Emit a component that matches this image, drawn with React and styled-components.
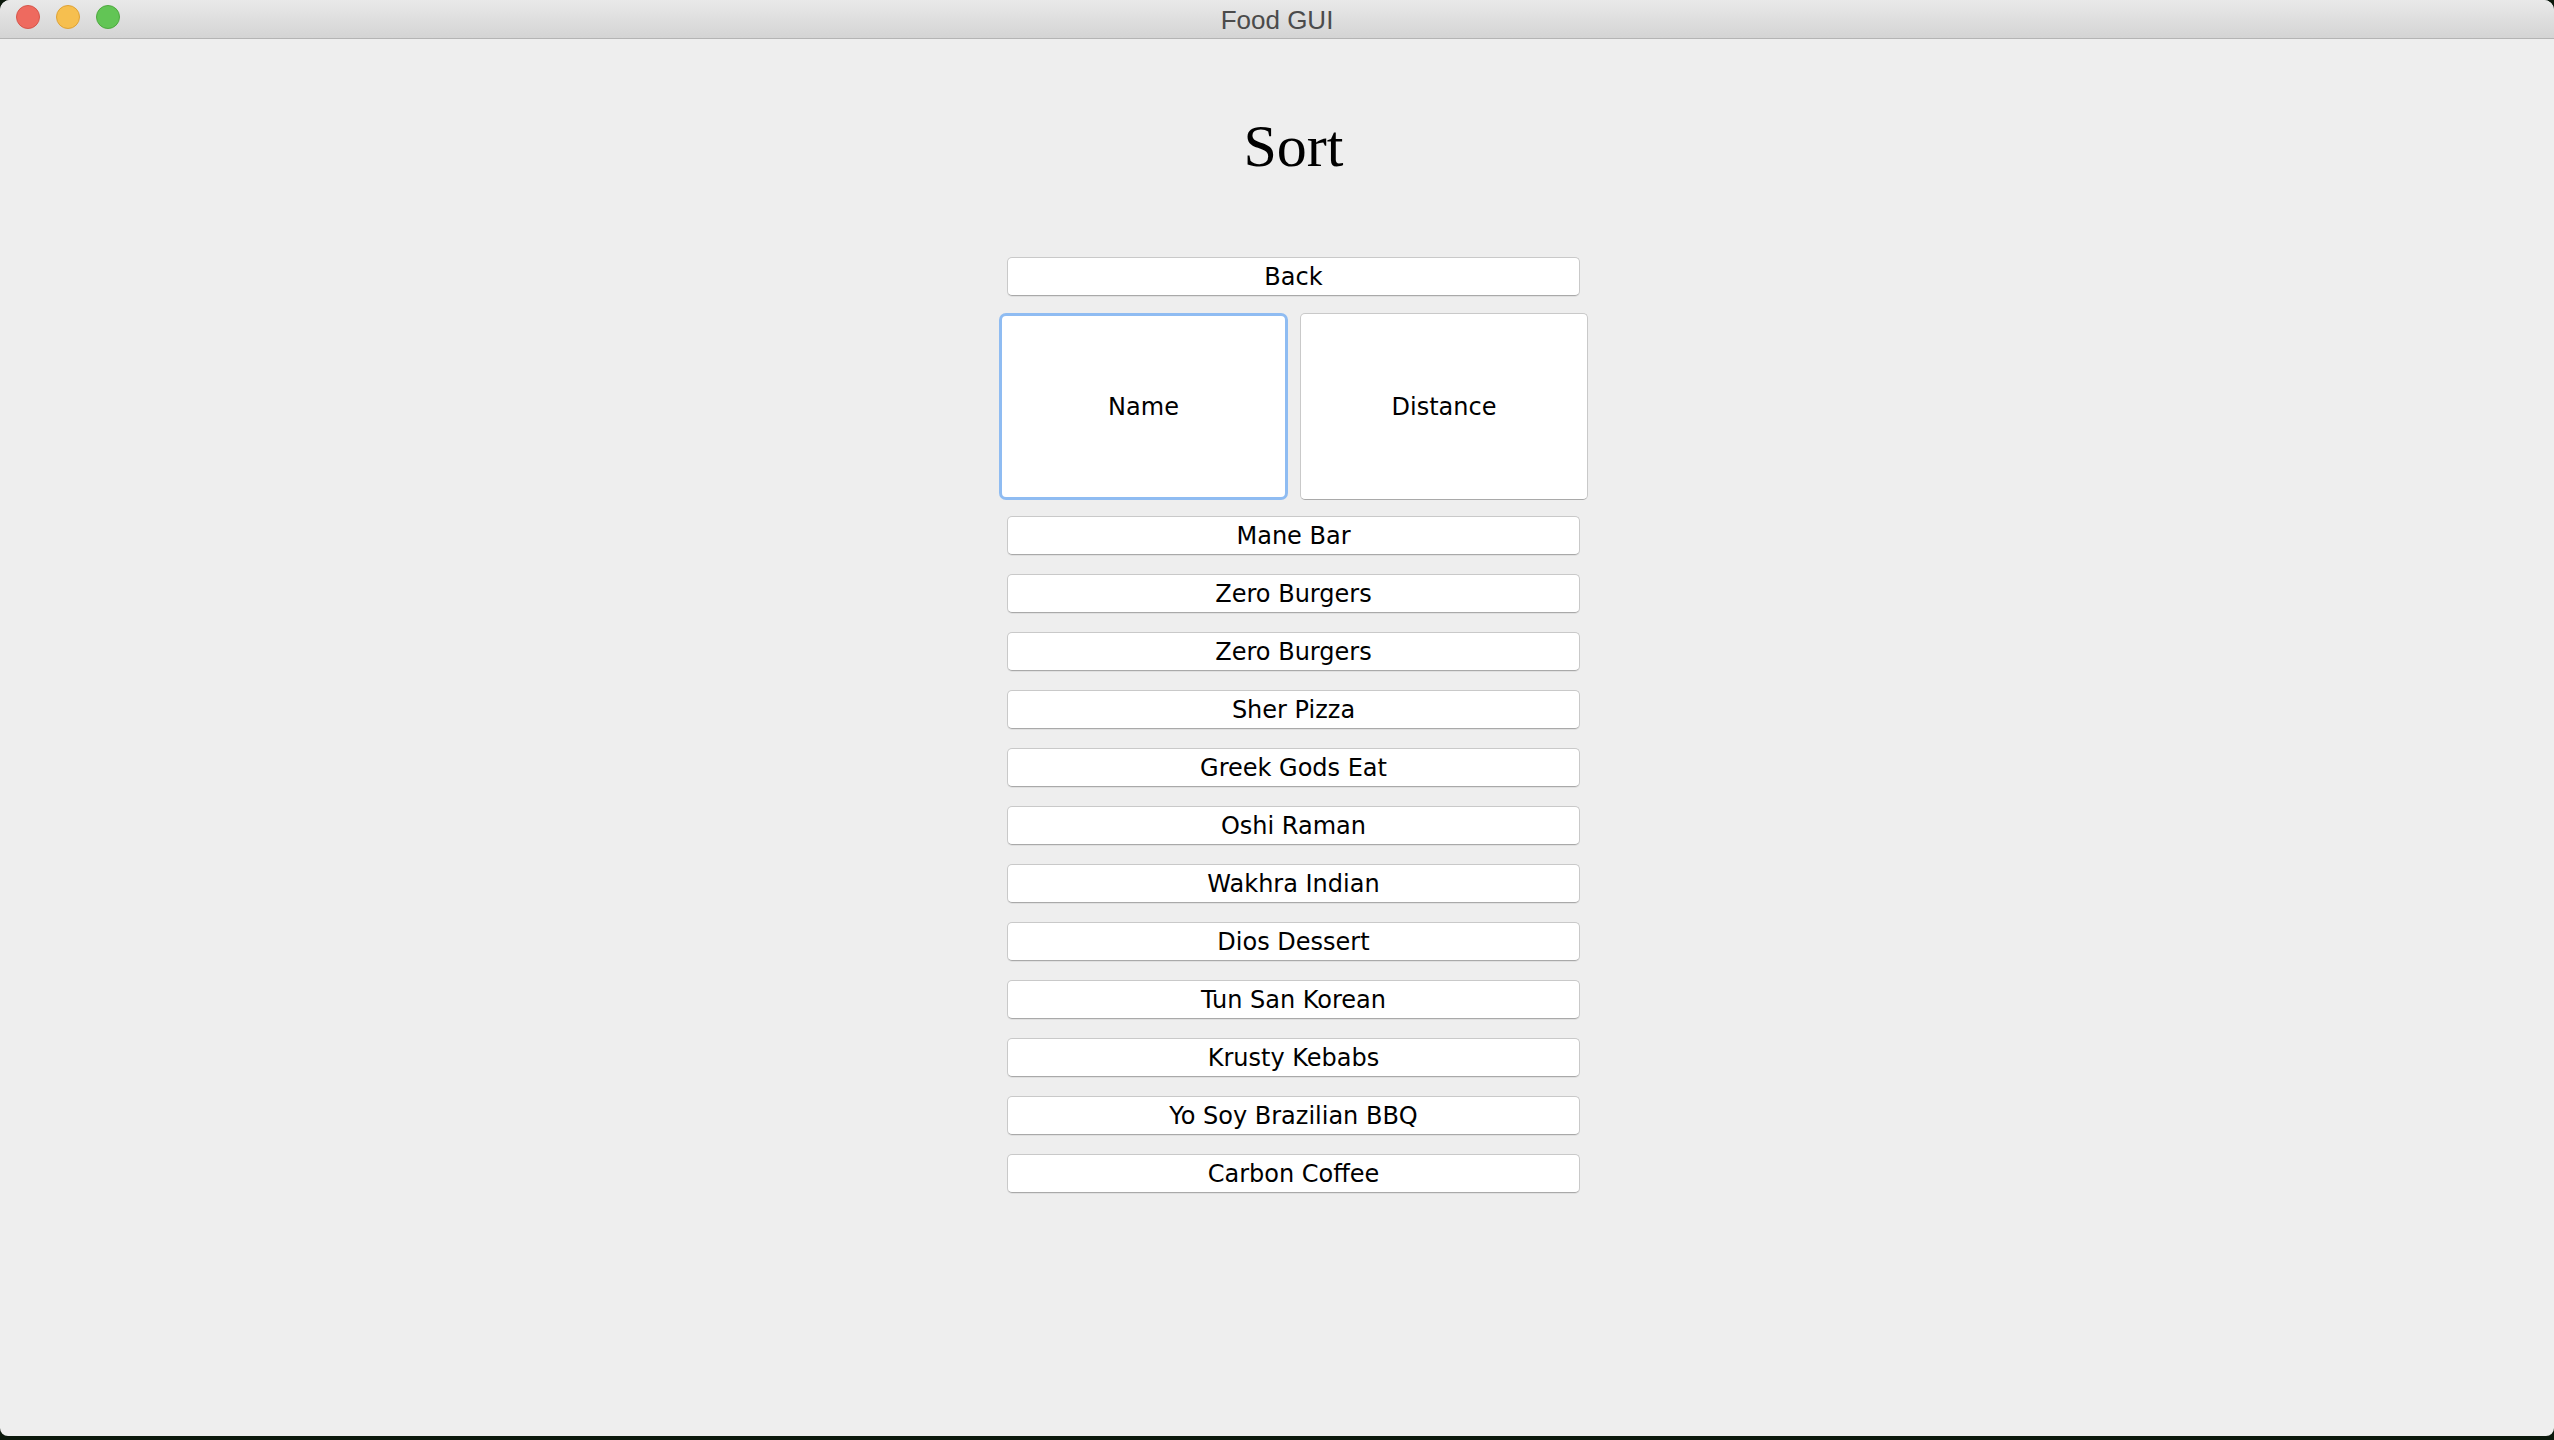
import React from 'react';
import styled, { createGlobalStyle } from 'styled-components';

const places = [
    'Mane Bar',
    'Zero Burgers',
    'Zero Burgers',
    'Sher Pizza',
    'Greek Gods Eat',
    'Oshi Raman',
    'Wakhra Indian',
    'Dios Dessert',
    'Tun San Korean',
    'Krusty Kebabs',
    'Yo Soy Brazilian BBQ',
    'Carbon Coffee',
];

const App = () => {
    return (
        <>
            <GlobalStyle />
            <Window>
                <TitleBar>
                    <Lights>
                        <Light color="#ee6a5f" edge="#d5564b" />
                        <Light color="#f6bf4f" edge="#dea236" />
                        <Light color="#62c555" edge="#4ea83f" />
                    </Lights>
                    <WindowTitle>Food GUI</WindowTitle>
                </TitleBar>
                <Content>
                    <Column>
                        <Heading>Sort</Heading>
                        <SmallButton>Back</SmallButton>
                        <SortGrid>
                            <BigButton focused>Name</BigButton>
                            <BigButton>Distance</BigButton>
                        </SortGrid>
                        <List>
                            {places.map((p, i) => (
                                <SmallButton key={i}>{p}</SmallButton>
                            ))}
                        </List>
                    </Column>
                </Content>
            </Window>
        </>
    );
};

const GlobalStyle = createGlobalStyle`
    html, body {
        margin: 0;
        padding: 0;
        background: #0b180c;
        height: 1440px;
        overflow: hidden;
    }
    * {
        box-sizing: border-box;
    }
`;

const Window = styled.div`
    width: 2554px;
    height: 1436px;
    background: #eeeeee;
    border-radius: 10px 10px 8px 8px;
    overflow: hidden;
    display: flex;
    flex-direction: column;
`;

const TitleBar = styled.div`
    position: relative;
    height: 39px;
    flex-shrink: 0;
    background: linear-gradient(#e9e9e9, #d4d4d4);
    border-bottom: 1px solid #b4b4b4;
    display: flex;
    align-items: center;
    justify-content: center;
`;

const Lights = styled.div`
    position: absolute;
    left: 16px;
    top: 5px;
    display: flex;
    gap: 16px;
`;

const Light = styled.div`
    width: 24px;
    height: 24px;
    border-radius: 50%;
    background: ${p => p.color};
    border: 1px solid ${p => p.edge};
`;

const WindowTitle = styled.div`
    font-family: "Liberation Sans", Arial, sans-serif;
    font-size: 26px;
    color: #4b4b4b;
    line-height: 30px;
    margin-top: 1px;
`;

const Content = styled.div`
    flex: 1;
    display: flex;
    justify-content: center;
    padding-left: 33px;
    padding-top: 74px;
`;

const Column = styled.div`
    width: 589px;
    display: flex;
    flex-direction: column;
    align-items: stretch;
`;

const Heading = styled.h1`
    margin: 0 0 78px;
    font-family: "Liberation Serif", "Times New Roman", serif;
    font-weight: normal;
    font-size: 60px;
    line-height: 66px;
    text-align: center;
    color: #000;
`;

const SmallButton = styled.div`
    margin: 0 8px;
    height: 39px;
    background: #ffffff;
    border: 1px solid #c9c9c9;
    border-bottom-color: #a9a9a9;
    border-radius: 5px;
    box-shadow: 0 1px 0 rgba(0, 0, 0, 0.06);
    display: flex;
    align-items: center;
    justify-content: center;
    font-family: "DejaVu Sans", "Lucida Grande", sans-serif;
    font-size: 24px;
    color: #000;
`;

const SortGrid = styled.div`
    display: grid;
    grid-template-columns: 289px 288px;
    column-gap: 12px;
    margin: 17px 0 16px;
`;

const BigButton = styled.div`
    height: 187px;
    background: #ffffff;
    border: ${p => (p.focused ? '3px solid #8fbcf2' : '1px solid #c9c9c9')};
    border-bottom-color: ${p => (p.focused ? '#8fbcf2' : '#a9a9a9')};
    border-radius: ${p => (p.focused ? '7px' : '5px')};
    display: flex;
    align-items: center;
    justify-content: center;
    font-family: "DejaVu Sans", "Lucida Grande", sans-serif;
    font-size: 24px;
    color: #000;
`;

const List = styled.div`
    display: flex;
    flex-direction: column;
    gap: 19px;
`;

export default App;
